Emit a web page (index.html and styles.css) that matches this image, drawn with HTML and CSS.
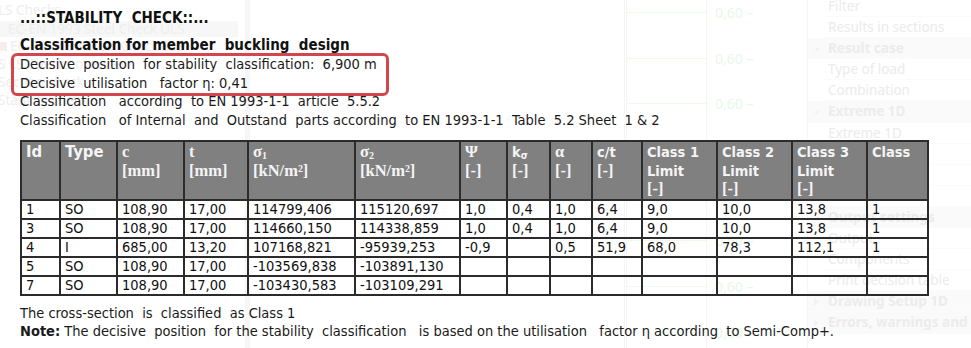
FILE: index.html
```html
<!DOCTYPE html>
<html>
<head>
<meta charset="utf-8">
<link rel="stylesheet" href="styles.css">
</head>
<body>
<div class="ghost" aria-hidden="true">
  <div class="g-tree">
    <div class="g-row">LS Checks</div>
    <div class="g-row g-sel">EC-EN 1993 Steel Check ULS</div>
    <div class="g-row"><span class="g-ico"></span>EC-EN 1993 Steel Check SLS</div>
    <div class="g-row">S LS Checks overview</div>
    <div class="g-row">Section check</div>
    <div class="g-row">Stability check</div>
  </div>
  <div class="g-split"></div>
  <div class="g-chart">
    <div class="g-tick"><span>0,60 –</span></div>
    <div class="g-tick"><span>0,60 –</span></div>
    <div class="g-tick"><span>0,60 –</span></div>
    <div class="g-tick"><span>0,60 –</span></div>
    <div class="g-tick"><span>0,60 –</span></div>
    <div class="g-tick"><span>0,60 –</span></div>
    <div class="g-tick"><span>0,60 –</span></div>
    <div class="g-tick"><span>0,60 –</span></div>
  </div>
  <div class="g-props">
    <div class="p-row">Filter</div>
    <div class="p-row">Results in sections</div>
    <div class="p-row p-grp">Result case</div>
    <div class="p-row">Type of load</div>
    <div class="p-row">Combination</div>
    <div class="p-row p-grp">Extreme 1D</div>
    <div class="p-row">Extreme 1D</div>
    <div class="p-row">Type of values</div>
    <div class="p-row">Values</div>
    <div class="p-row">Interval</div>
    <div class="p-row p-grp">Output settings</div>
    <div class="p-row">Output</div>
    <div class="p-row">Components</div>
    <div class="p-row">Print decision table</div>
    <div class="p-row p-grp p-closed">Drawing Setup 1D</div>
    <div class="p-row p-grp p-closed">Errors, warnings and notes</div>
  </div>
</div>

<main class="doc">
  <div class="title">...::STABILITY&nbsp; CHECK::...</div>
  <div class="heading">Classification for member&nbsp; buckling&nbsp; design</div>
  <div class="boxed">
    <div class="line">Decisive&nbsp; position&nbsp; for stability&nbsp; classification:&nbsp; 6,900 m</div>
    <div class="line">Decisive&nbsp; utilisation&nbsp;&nbsp; factor η: 0,41</div>
  </div>
  <div class="line">Classification&nbsp;&nbsp; according&nbsp; to EN 1993-1-1&nbsp; article&nbsp; 5.5.2</div>
  <div class="line">Classification&nbsp;&nbsp; of Internal&nbsp; and&nbsp; Outstand&nbsp; parts according&nbsp; to EN 1993-1-1&nbsp; Table&nbsp; 5.2 Sheet&nbsp; 1 &amp; 2</div>

  <table class="cls">
    <colgroup>
      <col style="width:39px"><col style="width:57px"><col style="width:67px"><col style="width:64px">
      <col style="width:107px"><col style="width:105px"><col style="width:47px"><col style="width:43px">
      <col style="width:42px"><col style="width:50px"><col style="width:75px"><col style="width:75px">
      <col style="width:75px"><col style="width:61px">
    </colgroup>
    <thead>
      <tr>
        <th class="sf">Id</th>
        <th class="sf">Type</th>
        <th><span class="sf">c</span><br><span class="sf">[mm]</span></th>
        <th><span class="sf">t</span><br><span class="sf">[mm]</span></th>
        <th><span class="sf">σ<sub>1</sub></span><br><span class="sf">[kN/m²]</span></th>
        <th><span class="sf">σ<sub>2</sub></span><br><span class="sf">[kN/m²]</span></th>
        <th><span class="sf">Ψ</span><br><span class="sf">[-]</span></th>
        <th>k<sub>σ</sub><br><span class="sf">[-]</span></th>
        <th><span class="sf">α</span><br><span class="sf">[-]</span></th>
        <th>c/t<br><span class="sf">[-]</span></th>
        <th>Class 1<br>Limit<br><span class="sf">[-]</span></th>
        <th>Class 2<br>Limit<br><span class="sf">[-]</span></th>
        <th>Class 3<br>Limit<br><span class="sf">[-]</span></th>
        <th>Class</th>
      </tr>
    </thead>
    <tbody>
      <tr><td>1</td><td>SO</td><td>108,90</td><td>17,00</td><td>114799,406</td><td>115120,697</td><td>1,0</td><td>0,4</td><td>1,0</td><td>6,4</td><td>9,0</td><td>10,0</td><td>13,8</td><td>1</td></tr>
      <tr><td>3</td><td>SO</td><td>108,90</td><td>17,00</td><td>114660,150</td><td>114338,859</td><td>1,0</td><td>0,4</td><td>1,0</td><td>6,4</td><td>9,0</td><td>10,0</td><td>13,8</td><td>1</td></tr>
      <tr><td>4</td><td>I</td><td>685,00</td><td>13,20</td><td>107168,821</td><td>-95939,253</td><td>-0,9</td><td></td><td>0,5</td><td>51,9</td><td>68,0</td><td>78,3</td><td>112,1</td><td>1</td></tr>
      <tr><td>5</td><td>SO</td><td>108,90</td><td>17,00</td><td>-103569,838</td><td>-103891,130</td><td></td><td></td><td></td><td></td><td></td><td></td><td></td><td></td></tr>
      <tr><td>7</td><td>SO</td><td>108,90</td><td>17,00</td><td>-103430,583</td><td>-103109,291</td><td></td><td></td><td></td><td></td><td></td><td></td><td></td><td></td></tr>
    </tbody>
  </table>

  <div class="line result">The cross-section&nbsp; is&nbsp; classified&nbsp; as Class 1</div>
  <div class="line"><b>Note:</b> The decisive&nbsp; position&nbsp; for the stability&nbsp; classification&nbsp;&nbsp; is based on the utilisation&nbsp;&nbsp; factor η according&nbsp; to Semi-Comp+.</div>
</main>
</body>
</html>
```
FILE: styles.css
```css
html, body {
  margin: 0;
  padding: 0;
  background: #ffffff;
}
body {
  width: 971px;
  height: 348px;
  overflow: hidden;
  position: relative;
  font-family: "DejaVu Sans Condensed", "DejaVu Sans", sans-serif;
  color: #111;
}

/* faint background application behind the report */
.ghost {
  position: absolute;
  inset: 0;
  z-index: 0;
  font-family: "Noto Sans", sans-serif;
  font-size: 13.5px;
}
.g-tree {
  position: absolute;
  left: -6px;
  top: 1px;
  width: 244px;
  display: flex;
  flex-direction: column;
}
.g-row {
  height: 18px;
  line-height: 18px;
  color: #eeeeee;
  padding-left: 4px;
  white-space: nowrap;
  display: flex;
  align-items: center;
  gap: 3px;
}
.g-sel {
  background: #f7f7f7;
  padding-left: 14px;
  height: 16px;
  margin-top: 2px;
}
.g-ico {
  width: 9px;
  height: 9px;
  background: #f9ecec;
  display: inline-block;
}
.g-split {
  position: absolute;
  left: 245px;
  top: 0;
  width: 5px;
  height: 348px;
  background: #f6f6f6;
}
.g-chart {
  position: absolute;
  left: 624px;
  top: 0;
  width: 180px;
  height: 348px;
  border-left: 1px solid #fcf1fb;
  display: flex;
  flex-direction: column;
  padding-top: 12px;
  gap: 44.7px;
}
.g-chart::before {
  content: "";
  position: absolute;
  left: 1px;
  top: 0;
  width: 79px;
  height: 348px;
  border-left: 1px solid #eefaee;
  border-right: 1px solid #eefaee;
}
.g-tick {
  height: 1px;
  width: 81px;
  margin-left: 1px;
  background: #eefaee;
  position: relative;
}
.g-tick span {
  position: absolute;
  left: 89px;
  top: -9px;
  font-size: 14px;
  color: #e8f8e8;
  white-space: nowrap;
}
.g-props {
  position: absolute;
  left: 807px;
  top: -4px;
  width: 164px;
  height: 352px;
  border-left: 1px solid #f5f5f5;
  display: flex;
  flex-direction: column;
}
.p-row {
  height: 21.1px;
  line-height: 21px;
  margin-left: 15px;
  padding-left: 5px;
  color: #ebebeb;
  white-space: nowrap;
  box-sizing: border-box;
  border-bottom: 1px solid #fbfbfb;
}
.p-grp {
  font-weight: bold;
  margin-left: 0;
  padding-left: 20px;
  background: #fafafa;
  color: #ececec;
  position: relative;
}
.p-grp::before {
  content: "";
  position: absolute;
  left: 6px;
  top: 8px;
  border-right: 5px solid #f2f2f2;
  border-top: 5px solid transparent;
}
.p-closed::before {
  border: 4px solid transparent;
  border-left: 5px solid #f2f2f2;
  border-right: 0;
  top: 7px;
}

/* report document */
.doc {
  position: relative;
  z-index: 1;
  padding: 8px 0 0 20px;
  font-size: 14.5px;
  line-height: 18.5px;
}
.title {
  font-weight: bold;
  font-size: 15px;
  line-height: 20px;
  color: #111;
}
.heading {
  font-weight: bold;
  font-size: 15px;
  line-height: 20px;
  margin-top: 7px;
  color: #111;
}
.line {
  white-space: nowrap;
  color: #1a1a1a;
}
.boxed {
  position: relative;
}
.boxed::after {
  content: "";
  position: absolute;
  left: -9px;
  top: -2px;
  width: 372px;
  height: 37px;
  border: 3px solid #d4464d;
  border-radius: 6px;
}

.cls {
  border-collapse: collapse;
  table-layout: fixed;
  width: 907px;
  margin-top: 11px;
  font-size: 14.5px;
}
.cls th, .cls td {
  border: 2px solid #2b2b2b;
  padding: 0 4px;
  text-align: left;
  white-space: nowrap;
  overflow: hidden;
}
.cls th {
  background: #808080;
  color: #f4f4f4;
  vertical-align: top;
  font-weight: bold;
  height: 50px;
  line-height: 18.5px;
  padding-top: 1px;
  font-family: "DejaVu Sans Condensed", "DejaVu Sans", sans-serif;
}
.cls th sub {
  font-size: 10px;
  vertical-align: -2px;
  line-height: 0;
}
.sf {
  font-family: "Liberation Serif", serif;
  font-size: 16.5px;
}
.cls td {
  height: 17px;
  line-height: 17px;
  color: #111;
}
.result {
  margin-top: 8px;
}
```
